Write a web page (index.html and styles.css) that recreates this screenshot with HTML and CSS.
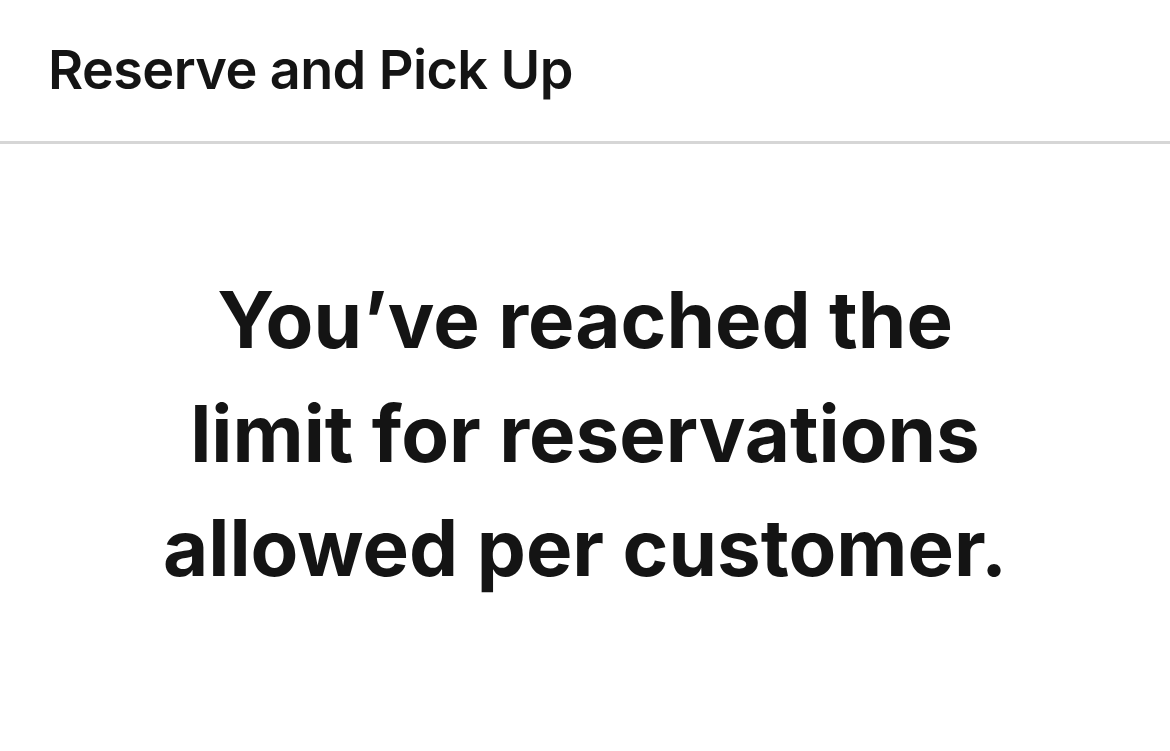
FILE: index.html
```html
<!DOCTYPE html>
<html lang="en">
<head>
  <meta charset="UTF-8" />
  <meta name="viewport" content="width=device-width, initial-scale=1.0"/>
  <title>Reserve and Pick Up</title>
  <link rel="stylesheet" href="styles.css">
</head>
<body>
  <header class="topbar">
    <h1>Reserve and Pick Up</h1>
  </header>

  <main class="message">
    <h2>You’ve reached the<br>limit for reservations<br>allowed per customer.</h2>
  </main>
</body>
</html>
```

FILE: styles.css
```css
body {
  font-family: Inter, "Noto Sans", sans-serif;
  margin: 0;
  padding: 0;
  background: #fff;
  color: #141414;
}

.topbar {
  height: 144px;
  padding: 0 48px;
  display: flex;
  align-items: center;
  border-bottom: 3px solid #d6d6d6;
  box-sizing: border-box;
}

.topbar h1 {
  margin: 0;
  font-size: 54px;
  font-weight: 600;
  letter-spacing: -0.6px;
  padding-bottom: 2px;
}

.message {
  padding-top: 119px;
  text-align: center;
}

.message h2 {
  margin: 0;
  font-size: 78px;
  font-weight: 700;
  line-height: 114px;
}
```
